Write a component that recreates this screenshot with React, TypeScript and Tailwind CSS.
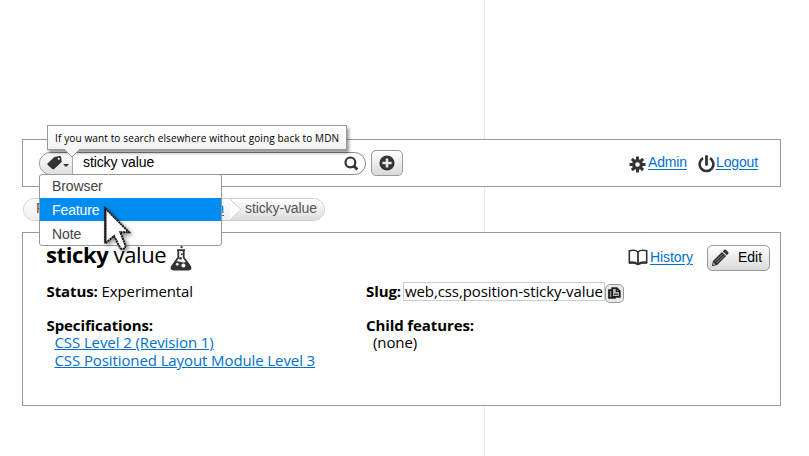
import React from "react";

const arial = "font-['Liberation_Sans',Arial,sans-serif]";
const open = "font-['Open_Sans','Noto_Sans',sans-serif]";

function TagIcon() {
  return (
    <svg width="16" height="16" viewBox="0 0 16 16" className="shrink-0">
      <path fillRule="evenodd" fill="#333" d="M7.4 2 12.6.9Q14 .8 14.2 2L14.7 7 7.2 14Q6.2 14.7 5.2 14L.7 9.9Q0 9 .7 8.2ZM11.8 2.7a1.1 1.1 0 1 0 0 2.2 1.1 1.1 0 0 0 0-2.2Z" />
    </svg>
  );
}

function SearchIcon() {
  return (
    <svg width="15" height="15" viewBox="0 0 15 15" fill="none" stroke="#333">
      <circle cx="6.4" cy="6.4" r="4.9" strokeWidth="2.2" />
      <path d="m9.6 9.8 3.8 3.7" strokeWidth="2.8" />
    </svg>
  );
}

function PlusIcon() {
  return (
    <svg width="16" height="16" viewBox="0 0 16 16">
      <circle cx="8" cy="8" r="7.6" fill="#333" />
      <path d="M8 3.4v9.2M3.4 8h9.2" stroke="#e8e8e8" strokeWidth="2.6" />
    </svg>
  );
}

function GearIcon() {
  return (
    <svg width="17" height="17" viewBox="0 0 17 17" className="shrink-0">
      <g stroke="#333" strokeWidth="2.9">
        <path d="M8.5.5v16M.5 8.5h16M2.9 2.9l11.2 11.2M14.1 2.9 2.9 14.1" />
      </g>
      <circle cx="8.5" cy="8.5" r="5.4" fill="#333" />
      <circle cx="8.5" cy="8.5" r="2.3" fill="#fff" />
    </svg>
  );
}

function PowerIcon() {
  return (
    <svg width="17" height="18" viewBox="0 0 17 18" fill="none" stroke="#333" className="shrink-0">
      <path d="M5 3.2A6.9 6.9 0 1 0 12 3.2" strokeWidth="2.6" />
      <path d="M8.5 1.5v8" strokeWidth="2.8" strokeLinecap="round" />
    </svg>
  );
}

function BookIcon() {
  return (
    <svg width="20" height="17" viewBox="0 0 20 17" fill="none" stroke="#333" className="shrink-0">
      <path d="M1.3 1.8C4 1.2 8 1 10 3c2-2 6-1.8 8.7-1.2v11.6c-3-.5-6-.4-8.7 1.6-2.7-2-5.7-2.1-8.7-1.6Z" strokeWidth="1.6" />
      <path d="M10 3v12" strokeWidth="1.8" />
      <path d="M1 14.2c3.4-.6 6-.2 9 1.3 3-1.5 5.6-1.9 9-1.3" strokeWidth="1.5" />
    </svg>
  );
}

function PencilIcon() {
  return (
    <svg width="18" height="18" viewBox="0 0 18 18" className="shrink-0">
      <path d="m.8 17.2 1.2-5.3 9-9 4.1 4.1-9 9Z" fill="#333" />
      <path d="m11.7 2.2 1.6-1.5q.8-.6 1.6.1l2.3 2.3q.7.8 0 1.6l-1.4 1.6Z" fill="#333" />
      <path d="m4.1 12.6 7.4-7.4M5.6 14l7.4-7.4" stroke="#999" strokeWidth=".8" />
      <path d="m2.4 13.6 2 2-2.1.5Z" fill="#ccc" />
    </svg>
  );
}

function FlaskIcon() {
  return (
    <svg width="22" height="25" viewBox="0 0 22 25" className="shrink-0">
      <path d="M7 4.2h8M8.3 4.5v7L1.8 20.8Q.7 23.5 3.5 23.6h15q2.8-.1 1.7-2.8L13.7 11.5v-7" fill="none" stroke="#333" strokeWidth="1.8" />
      <path d="M5 15.8q3-1 5.8.2t6.2-.5l3.4 5.5q.7 2.5-2 2.6H3.6q-2.4-.3-1.5-2.7Z" fill="#333" />
      <circle cx="7.3" cy="18.3" r="1.4" fill="#fff" />
      <circle cx="13.4" cy="19.4" r="2" fill="#fff" />
      <circle cx="10.5" cy="12.4" r="1.3" fill="#333" />
      <circle cx="11.8" cy="8.2" r="1" fill="#333" />
      <circle cx="11.6" cy="1.2" r="1.1" fill="#333" />
    </svg>
  );
}

function CopyIcon() {
  return (
    <svg width="13" height="13" viewBox="0 0 13 13" fill="#bbb" stroke="#1c1c1c" strokeWidth="1.7" className="shrink-0">
      <path d="M1 3.2h6v7.6H1Z" fill="#888" />
      <path d="M4.2 1.2h4.6l3 2.8v5.8H4.2Z" />
      <path d="M8.4 1.2v3.2h3.2" fill="none" strokeWidth="1.4" />
      <path d="M5.8 7.2h4.4" fill="none" strokeWidth="1" />
    </svg>
  );
}

function Cursor() {
  return (
    <svg width="32" height="46" viewBox="0 0 32 46" className="absolute left-[102px] top-[206px] z-30 overflow-visible drop-shadow-[2px_2px_2px_rgba(0,0,0,0.45)]">
      <path d="M3.2 2.2 27 26.2H18.3L23.3 39q.5 3.4-2.6 4-2.3 0-3-2L12 30 3.2 37.5Z" fill="#fff" stroke="#221f20" strokeWidth="2" strokeDasharray="2.2 .5" />
      <path d="M3.4 3v33.5" stroke="#221f20" strokeWidth="2" />
    </svg>
  );
}

export default function App() {
  return (
    <div className={`relative h-[456px] w-[809px] overflow-hidden bg-white pl-[22px] pt-[139px] text-black ${open}`}>
      <div className="absolute left-[484px] top-0 h-full w-px bg-[#e9e9e9]" />

      <header className={`relative flex h-[48px] w-[759px] items-center border border-[#999] bg-white pl-4 text-[14px] ${arial}`}>
        <div className="flex h-[23px] w-[327px] items-center overflow-hidden rounded-full border border-[#888] bg-white">
          <div className="flex h-full w-[33px] items-center border-r border-[#aaa] bg-gradient-to-b from-white to-[#dedfe0] pl-[7px]">
            <TagIcon />
            <span className="mt-[5px] border-x-[3px] border-t-[3px] border-x-transparent border-t-[#333]" />
          </div>
          <span className="mb-[2px] grow pl-[10px] leading-[19px] tracking-[-0.1px]">sticky value</span>
          <span className="mr-[6px]"><SearchIcon /></span>
        </div>
        <button className="mb-px ml-[5px] flex h-[26px] w-[32px] items-center justify-center rounded-[5px] border border-[#999] bg-gradient-to-b from-white to-[#d9dadb]"><PlusIcon /></button>
        <nav className="ml-auto flex items-center pr-[22px] text-[#0070cc]">
          <span className="mr-[2px] mt-[2px]"><GearIcon /></span>
          <a className="mb-[2px] w-[39px] whitespace-nowrap underline underline-offset-2 tracking-[-0.15px]">Admin</a>
          <span className="ml-[11px] mr-px mt-[2px]"><PowerIcon /></span>
          <a className="mb-[2px] w-[42px] whitespace-nowrap underline underline-offset-2 tracking-[-0.15px]">Logout</a>
        </nav>
      </header>

      <div className="relative flex h-[45px] items-center">
        <div className={`ml-[1px] flex h-[23px] w-[302px] overflow-hidden rounded-full border border-[#ccc] bg-white text-[14px] leading-[19px] text-[#555] ${arial}`}>
          <div className="flex w-[206px] justify-between bg-gradient-to-b from-white to-[#eee] pl-[12px]">
            <span>F</span><a className="mr-[6px] text-[#0070cc] underline underline-offset-2">position</a>
          </div>
          <svg width="12" height="21" viewBox="0 0 12 21" className="shrink-0">
            <defs>
              <linearGradient id="crumbShade" x2="0" y2="1"><stop stopColor="#fff" /><stop offset="1" stopColor="#dcddde" /></linearGradient>
            </defs>
            <path d="M0 0h12v21H0Z" fill="url(#crumbShade)" />
            <path d="M0 0 11 10.5 0 21Z" fill="#fff" />
            <path d="m0 0 11 10.5L0 21" fill="none" stroke="#ccc" />
          </svg>
          <div className="grow bg-gradient-to-b from-white to-[#dcddde] pl-[3px] tracking-[-0.1px]">sticky-value</div>
        </div>
      </div>

      <main className="relative h-[174px] w-[759px] border border-[#999] bg-white">
        <div className="flex h-[45px] items-start pl-[23px]">
          <h1 className="mt-[6px] w-[122px] whitespace-nowrap text-[22px] leading-[30px] tracking-[-0.4px]"><b>sticky</b> value</h1>
          <span className="ml-[2px] mt-[13px]"><FlaskIcon /></span>
          <div className={`ml-auto mt-[11px] flex h-[27px] items-center self-start pr-[10px] text-[14px] ${arial}`}>
            <span className="mr-[2px]"><BookIcon /></span>
            <a className="mb-px w-[43px] tracking-[-0.1px] text-[#0070cc] underline underline-offset-2">History</a>
            <button className="ml-[14px] flex h-[26px] w-[63px] items-center rounded-[5px] border border-[#999] bg-gradient-to-b from-white to-[#d9dadb] pl-[3px]">
              <PencilIcon /><span className="mb-px ml-[9px]">Edit</span>
            </button>
          </div>
        </div>
        <div className="flex pl-[23.5px] pt-[3px] text-[15px] leading-[17px] tracking-[-0.1px]">
          <section className="w-[319.5px]">
            <p className="mt-[2px] whitespace-nowrap"><b>Status:</b> Experimental</p>
            <p className="mt-[17px]"><b>Specifications:</b></p>
            <p className="whitespace-nowrap pl-[8px] text-[#0070cc]"><a className="underline underline-offset-1">CSS Level 2 (Revision 1)</a></p>
            <p className="mt-px whitespace-nowrap pl-[8px] text-[#0070cc]"><a className="underline underline-offset-1">CSS Positioned Layout Module Level 3</a></p>
          </section>
          <section>
            <div className="flex h-[20px] items-center whitespace-nowrap">
              <b className="w-[37px]">Slug:</b>
              <span className="mt-px h-[19px] w-[202px] border border-[#ccc] pl-[1px] leading-[17px]">web,css,position-sticky-value</span>
              <button className="mt-[4px] flex h-[19px] w-[19px] items-center justify-center rounded-[5px] border border-[#999] bg-[#e8e8e8]"><CopyIcon /></button>
            </div>
            <p className="mt-[16px]"><b>Child features:</b></p>
            <p className="pl-[7px]">(none)</p>
          </section>
        </div>
      </main>

      <div className={`absolute left-[39px] top-[174px] z-10 h-[72px] w-[183px] rounded-[3px] border border-[#999] bg-white text-[14px] leading-[23px] tracking-[-0.1px] text-[#444] ${arial}`}>
        <div className="h-[23px] pl-[12px]">Browser</div>
        <div className="h-[23px] bg-[#008cf1] pl-[12px] leading-[24px] text-white">Feature</div>
        <div className="h-[24px] pl-[12px] leading-[26px]">Note</div>
      </div>

      <div className="absolute left-[47px] top-[125px] z-20 h-[25px] w-[300px] border border-[#999] bg-gradient-to-b from-white to-[#f3f3f3] pl-[7px] text-[10px] font-medium leading-[25px] tracking-[0.13px] shadow-[2px_3px_3px_rgba(0,0,0,0.4)]">
        <span className="whitespace-nowrap">If you want to search elsewhere without going back to MDN</span>
        <svg width="16" height="10" viewBox="0 0 16 10" className="absolute left-[16px] top-[22px]">
          <path d="M0 0h16v1L8 9 0 1Z" fill="#f4f4f4" />
          <path d="m0 1 8 8 8-8" fill="none" stroke="#999" />
        </svg>
      </div>
      <Cursor />
    </div>
  );
}
